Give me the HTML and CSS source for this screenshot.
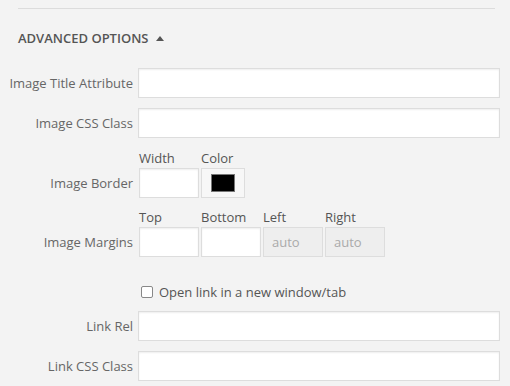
FILE: index.html
```html
<!DOCTYPE html>
<html>
<head>
<meta charset="utf-8">
<link rel="stylesheet" href="styles.css">
</head>
<body>
<div class="panel">
  <hr class="divider">
  <div class="toggle">ADVANCED OPTIONS <span class="arrow"></span></div>
  <div class="row"><span class="label">Image Title Attribute</span><input class="field" type="text"></div>
  <div class="row"><span class="label">Image CSS Class</span><input class="field" type="text"></div>
  <div class="row group border">
    <span class="label">Image Border</span>
    <div class="cols">
      <div class="col"><span class="sub">Width</span><input class="small" type="text"></div>
      <div class="col"><span class="sub">Color</span><span class="color"><span class="swatch"></span></span></div>
    </div>
  </div>
  <div class="row group margins">
    <span class="label">Image Margins</span>
    <div class="cols">
      <div class="col"><span class="sub">Top</span><input class="small" type="text"></div>
      <div class="col"><span class="sub">Bottom</span><input class="small" type="text"></div>
      <div class="col"><span class="sub">Left</span><input class="small disabled" type="text" value="auto" disabled></div>
      <div class="col"><span class="sub">Right</span><input class="small disabled" type="text" value="auto" disabled></div>
    </div>
  </div>
  <label class="check"><span class="box"></span>Open link in a new window/tab</label>
  <div class="row"><span class="label">Link Rel</span><input class="field" type="text"></div>
  <div class="row"><span class="label">Link CSS Class</span><input class="field" type="text"></div>
</div>
</body>
</html>
```
FILE: styles.css
```css
html, body {
  margin: 0;
  padding: 0;
  background: #f3f3f3;
}
body {
  font-family: "Open Sans", "Liberation Sans", sans-serif;
  font-size: 13px;
  color: #666;
}
.panel {
  padding: 8px 10px 0 0;
}
.divider {
  margin: 0 5px 0 18px;
  border: 0;
  border-top: 1px solid #dcdcdc;
  height: 0;
}
.toggle {
  margin: 20px 0 0 18px;
  height: 18px;
  line-height: 18px;
  font-weight: 600;
  color: #555;
  display: flex;
  align-items: center;
}
.arrow {
  display: inline-block;
  margin-left: 7px;
  width: 0;
  height: 0;
  border-left: 4px solid transparent;
  border-right: 4px solid transparent;
  border-bottom: 5px solid #555;
}
.row {
  display: flex;
  align-items: center;
  margin-top: 10px;
}
.toggle + .row {
  margin-top: 21px;
}
.label {
  width: 133px;
  text-align: right;
  margin-right: 5px;
  flex: none;
}
input {
  font-family: inherit;
  font-size: 13px;
  box-sizing: border-box;
  margin: 0;
  border: 1px solid #ddd;
  background: #fff;
  box-shadow: inset 0 1px 2px rgba(0,0,0,.07);
  outline: none;
  padding: 3px 8px;
}
.field {
  flex: 1;
  height: 30px;
}
.group {
  align-items: flex-end;
}
.group.border {
  margin-top: 12px;
}
.group.margins {
  margin-top: 11px;
}
.group .label {
  line-height: 30px;
  margin-right: 6px;
}
.cols {
  display: flex;
  gap: 2px;
}
.col {
  display: flex;
  flex-direction: column;
  width: 60px;
}
.sub {
  line-height: 16px;
  margin-bottom: 2px;
  color: #555;
}
.small {
  width: 60px;
  height: 30px;
}
.disabled {
  background: #eee;
  color: #aaa;
  box-shadow: none;
  padding-left: 8px;
}
.color {
  box-sizing: border-box;
  width: 44px;
  height: 30px;
  border: 1px solid #ddd;
  background: #f7f7f7;
  display: flex;
  align-items: center;
  justify-content: center;
}
.swatch {
  box-sizing: border-box;
  width: 24px;
  height: 18px;
  background: #000;
  border: 1px solid #777;
}
.check {
  display: flex;
  align-items: center;
  margin: 25px 0 0 141px;
  height: 20px;
  color: #555;
}
.box {
  box-sizing: border-box;
  width: 12px;
  height: 12px;
  border: 1px solid #888;
  border-radius: 2px;
  background: #fff;
  margin-right: 6px;
}
.check + .row {
  margin-top: 9px;
}
```
